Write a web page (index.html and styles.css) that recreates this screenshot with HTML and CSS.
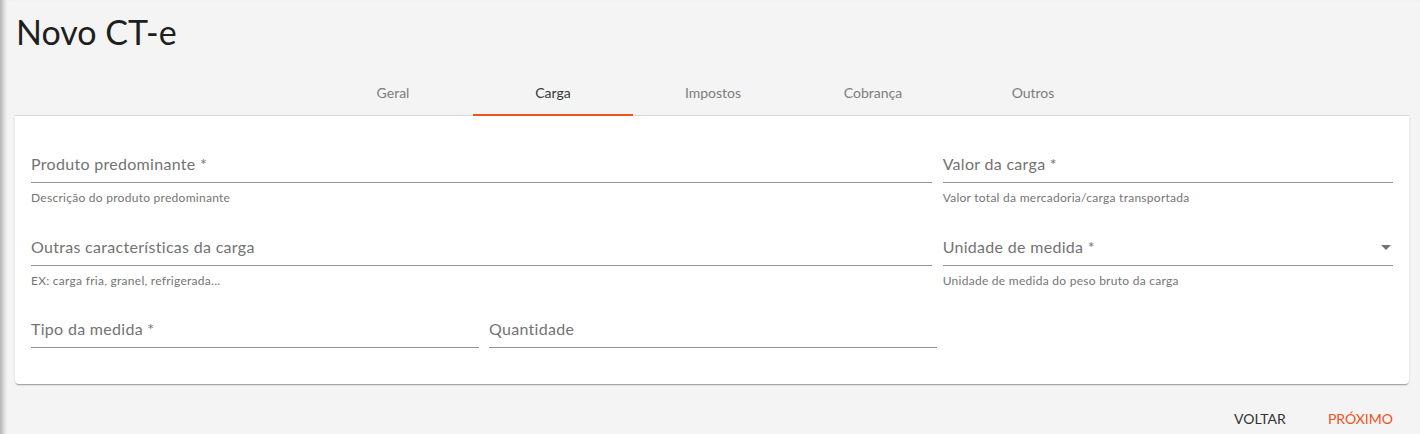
FILE: index.html
```html
<!DOCTYPE html>
<html lang="pt-BR">
<head>
<meta charset="utf-8">
<title>Novo CT-e</title>
<link rel="stylesheet" href="styles.css">
</head>
<body>
<div class="page">
  <h1 class="title">Novo CT-e</h1>
  <nav class="tabs">
    <div class="tab">Geral</div>
    <div class="tab active">Carga</div>
    <div class="tab">Impostos</div>
    <div class="tab">Cobrança</div>
    <div class="tab">Outros</div>
  </nav>
  <section class="card">
    <div class="row row-wide">
      <div class="field">
        <div class="input"><span class="label">Produto predominante *</span></div>
        <div class="hint">Descrição do produto predominante</div>
      </div>
      <div class="field">
        <div class="input"><span class="label">Valor da carga *</span></div>
        <div class="hint">Valor total da mercadoria/carga transportada</div>
      </div>
    </div>
    <div class="row row-wide">
      <div class="field">
        <div class="input"><span class="label">Outras características da carga</span></div>
        <div class="hint">EX: carga fria, granel, refrigerada...</div>
      </div>
      <div class="field">
        <div class="input"><span class="label">Unidade de medida *</span><span class="caret"></span></div>
        <div class="hint">Unidade de medida do peso bruto da carga</div>
      </div>
    </div>
    <div class="row row-thirds">
      <div class="field">
        <div class="input"><span class="label">Tipo da medida *</span></div>
      </div>
      <div class="field">
        <div class="input"><span class="label">Quantidade</span></div>
      </div>
    </div>
  </section>
  <footer class="actions">
    <button class="btn">VOLTAR</button>
    <button class="btn primary">PRÓXIMO</button>
  </footer>
</div>
</body>
</html>
```
FILE: styles.css
```css
html, body {
  margin: 0;
  padding: 0;
}
body {
  background: #f4f4f4;
  font-family: Lato, "Open Sans", Arial, sans-serif;
  color: #222;
  min-height: 434px;
  box-shadow: inset 7px 0 5px -4px rgba(0, 0, 0, 0.28);
}
.page {
  padding: 0 11px 0 15px;
}
.title {
  margin: 0;
  padding: 12px 0 0 1px;
  height: 58px;
  box-sizing: border-box;
  font-size: 34px;
  line-height: 40px;
  font-weight: 400;
  color: #1e1e1e;
}
.tabs {
  display: flex;
  justify-content: center;
  height: 46px;
  border-bottom: 1px solid #dcdcdc;
  margin-top: 12px;
  padding-left: 2px;
  box-sizing: border-box;
}
.tab {
  width: 160px;
  display: flex;
  align-items: center;
  justify-content: center;
  font-size: 14px;
  color: #7d7d7d;
  padding-bottom: 1px;
  box-sizing: border-box;
}
.tab.active {
  color: #383838;
  border-bottom: 2px solid #f2511b;
  padding-bottom: 0;
  margin-bottom: -1px;
}
.card {
  background: #fff;
  border-radius: 0 0 4px 4px;
  box-shadow: 0 2px 1px -1px rgba(0,0,0,0.2), 0 1px 1px 0 rgba(0,0,0,0.12), 0 1px 3px 0 rgba(0,0,0,0.1);
  padding: 29px 16px 13px 16px;
  display: flex;
  flex-direction: column;
  gap: 22px;
}
.row {
  display: grid;
}
.row-wide {
  grid-template-columns: 2fr 1fr;
  column-gap: 11px;
}
.row-thirds {
  grid-template-columns: 448px 448px;
  column-gap: 10px;
  margin-top: -1px;
}
.field {
  min-height: 61px;
}
.input {
  height: 38px;
  box-sizing: border-box;
  padding-top: 9px;
  border-bottom: 1px solid #949494;
  display: flex;
  justify-content: space-between;
}
.label {
  font-size: 16px;
  line-height: 20px;
  color: #737373;
  letter-spacing: 0.3px;
}
.caret {
  width: 0;
  height: 0;
  margin: 8px 2px 0 0;
  border-left: 5px solid transparent;
  border-right: 5px solid transparent;
  border-top: 5px solid #737373;
}
.hint {
  margin-top: 8px;
  font-size: 12px;
  line-height: 14px;
  color: #757575;
  letter-spacing: 0.27px;
}
.actions {
  display: flex;
  justify-content: flex-end;
  gap: 10px;
  margin-top: 16px;
}
.btn {
  height: 36px;
  padding: 0 16px;
  background: none;
  border: none;
  font-family: inherit;
  font-size: 14px;
  color: #333;
  cursor: pointer;
}
.btn.primary {
  color: #f2511b;
}
```
